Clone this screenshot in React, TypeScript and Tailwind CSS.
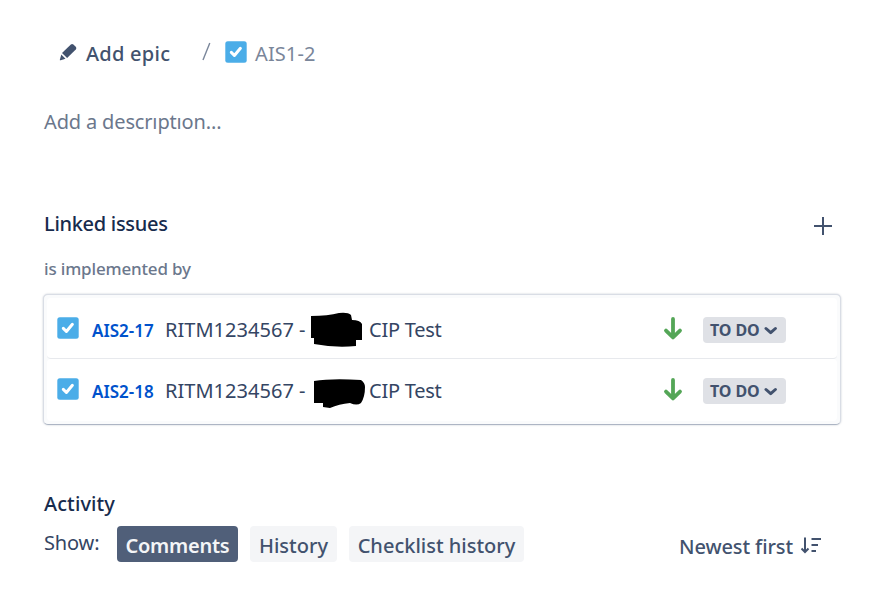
import React from "react";

function CheckIcon({ className = "" }: { className?: string }) {
  return (
    <svg className={`shrink-0 ${className}`} width="22" height="22" viewBox="0 0 22 22">
      <rect x="0.3" y="0.3" width="21.4" height="21.4" rx="2.5" fill="#4bade8" />
      <path d="M6.3 11.4 L9.4 14.5 L15.4 7.3" fill="none" stroke="#fff" strokeWidth="3" strokeLinecap="round" strokeLinejoin="round" />
    </svg>
  );
}

function Redaction({ shape }: { shape: string }) {
  return (
    <svg className="block shrink-0" width="56" height="40" viewBox="0 0 56 40">
      <path d={shape} fill="#000" />
    </svg>
  );
}

type IssueProps = { id: string; shape: string; className: string };

function IssueRow({ id, shape, className }: IssueProps) {
  return (
    <div className={`flex items-start ${className}`}>
      <CheckIcon className="mt-[19px] ml-[10px]" />
      <span className="mt-[21px] ml-[13px] w-[73px] text-[17px] leading-6 font-semibold text-[#0052cc]">{id}</span>
      <span className="mt-[20px] w-[145px] text-[20px] leading-6 tracking-[0.03px] text-[#344563]">RITM1234567 -</span>
      <div className="mt-[10px] w-[59px]">
        <Redaction shape={shape} />
      </div>
      <span className="mt-[20px] w-[294px] text-[20px] leading-6 tracking-[-0.25px] text-[#344563]">CIP Test</span>
      <svg className="mt-[19px] w-[20px] shrink-0" height="24" viewBox="0 0 20 24">
        <path d="M10 2 V20 M3 13.6 L10 20.4 L17 13.6" fill="none" stroke="#54a657" strokeWidth="3.8" strokeLinecap="round" strokeLinejoin="round" />
      </svg>
      <button className="mt-[19px] ml-[20px] flex h-[26px] w-[83px] items-center rounded-[4px] bg-[#dfe1e6] pl-[7px] text-[16px] leading-6 font-bold text-[#42526e]">
        <span className="w-[54px] text-left tracking-[-0.1px]">TO DO</span>
        <svg width="14" height="10" viewBox="0 0 14 10">
          <path d="M2 3.5 L6.7 7.7 L11.4 3.5" fill="none" stroke="#42526e" strokeWidth="3" strokeLinecap="round" strokeLinejoin="round" />
        </svg>
      </button>
    </div>
  );
}

export default function App() {
  return (
    <main className="h-[596px] w-[881px] overflow-hidden bg-white pl-[44px] font-['Noto_Sans','Open_Sans',sans-serif] whitespace-nowrap text-[#42526e]">
      <nav className="flex h-[82px] items-start pt-[41px] text-[20px] leading-6">
        <svg className="mt-[2px] ml-[15px] shrink-0" width="18" height="18" viewBox="0 0 18 18">
          <path d="M11.6 1.8 Q12.9 0.6 14.4 1.5 L17 4 Q17.8 5.2 16.8 6.4 L8.1 15 L3 9.9 Z" fill="#42526e" />
          <path d="M2.3 11.6 L6.5 15.8 L1.7 17.3 Q0.6 17.5 0.9 16.4 Z" fill="#42526e" />
        </svg>
        <span className="mt-px ml-[9px] w-[116px] font-medium tracking-[0.25px]">Add epic</span>
        <svg className="mt-[1px] w-[23px] shrink-0" height="19" viewBox="0 0 23 19">
          <path d="M1 18 L7.8 1" stroke="#7a869a" strokeWidth="1.4" />
        </svg>
        <CheckIcon />
        <span className="mt-px ml-[8px] tracking-[0.1px] text-[#7a869a]">AIS1-2</span>
      </nav>
      <p className="mt-[28px] h-[102px] text-[20px] leading-6 tracking-[-0.15px] text-[#6b778c]">Add a descrıptıon...</p>
      <div className="flex h-[45px] items-start">
        <h2 className="w-[769px] text-[20px] leading-6 font-medium tracking-[-0.3px] text-[#172b4d]">Linked issues</h2>
        <svg className="mt-[4px]" width="20" height="20" viewBox="0 0 20 20">
          <path d="M10 1 V19 M1 10 H19" stroke="#42526e" strokeWidth="2" />
        </svg>
      </div>
      <h3 className="h-[37px] text-[17px] leading-6 font-medium tracking-[-0.17px] text-[#6b778c]">is implemented by</h3>
      <section className="-ml-[1px] h-[131px] w-[798px] rounded-[5px] border border-[#d9dde5] border-b-[#adb5c4] bg-[#fafbfc] p-[3px] shadow-[0_0_2px_rgba(9,30,66,0.25)]">
        <IssueRow id="AIS2-17" className="h-[61px] rounded-[4px] border-b border-[#e7e9ed] bg-white" shape="M1 8 Q18 8 29 5 Q38 4 41 7 L42 12 Q50 12 52 16 V32 H46 V38 Q25 40 4 36 V30 H1 Z" />
        <IssueRow id="AIS2-18" className="h-[62px] rounded-[4px] bg-white" shape="M4 12 Q22 9 51 11 Q55 14 55 18 Q55 28 51 34 Q47 37 40 34 Q29 35 20 39 L13 38 V34 L4 34 Z" />
      </section>
      <h2 className="mt-[67px] h-[34px] text-[20px] leading-6 font-medium tracking-[0.1px] text-[#172b4d]">Activity</h2>
      <div className="flex h-[36px] items-start text-[20px]">
        <span className="mt-[5px] w-[73px] leading-6 tracking-[-0.15px] text-[#344563]">Show:</span>
        <button className="h-[36px] w-[121px] rounded-[4px] bg-[#505f79] pt-[3px] font-semibold tracking-[-0.25px] text-[#f4f5f7]">Comments</button>
        <button className="ml-[12px] h-[36px] w-[87px] rounded-[4px] bg-[#f4f5f7] pt-[3px] font-medium">History</button>
        <button className="ml-[12px] h-[36px] w-[175px] rounded-[4px] bg-[#f4f5f7] pt-[3px] font-medium">Checklist history</button>
        <button className="ml-[155px] flex items-start pt-[9px] font-medium">
          <span className="w-[121px] text-left leading-6 tracking-[-0.1px]">Newest first</span>
          <svg className="mt-[1px]" width="22" height="18" viewBox="0 0 22 18">
            <path d="M5 1.5 V16 M1.5 12.5 L5 16 L8.5 12.5 M11.5 3 H21 M11.5 9 H18 M11.5 15 H16" fill="none" stroke="#42526e" strokeWidth="2" />
          </svg>
        </button>
      </div>
    </main>
  );
}
